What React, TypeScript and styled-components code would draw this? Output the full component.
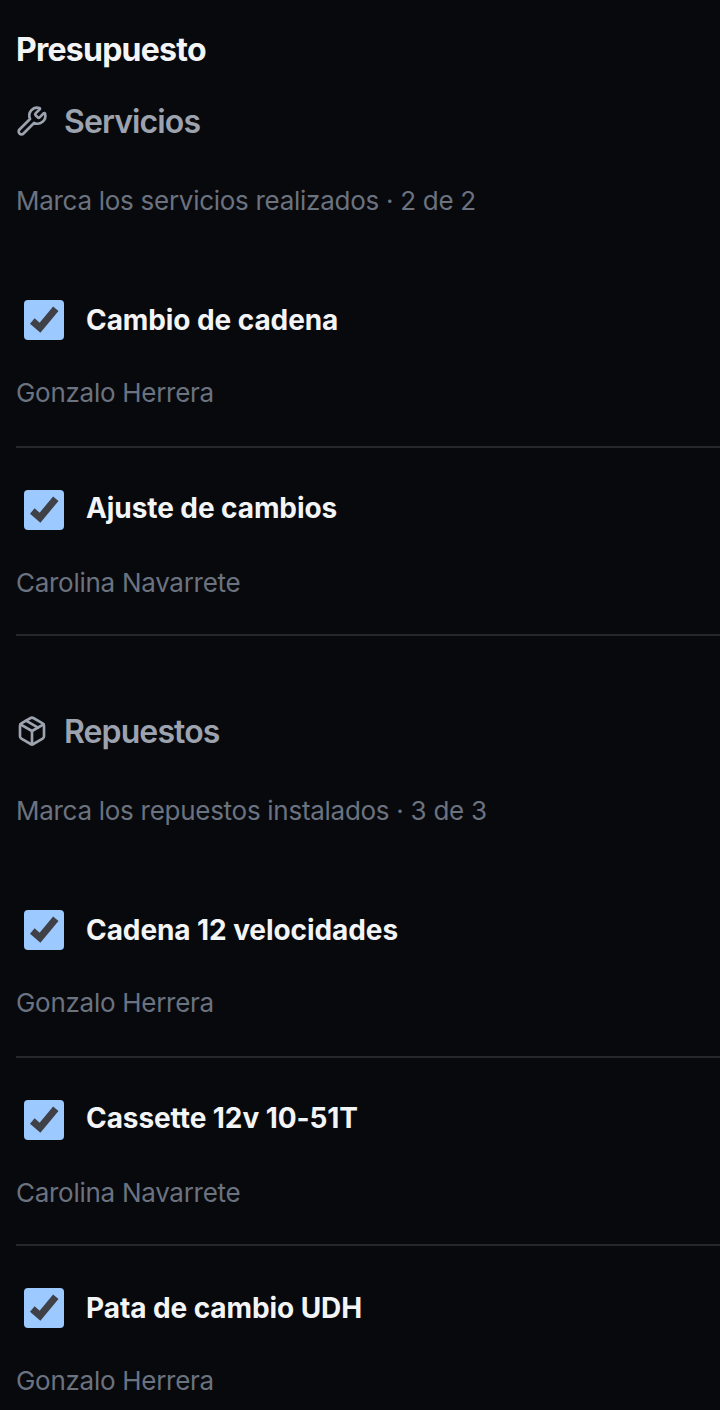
import React from 'react';
import styled, { createGlobalStyle } from 'styled-components';
import { Package, Wrench, type LucideIcon } from 'lucide-react';

const GlobalStyle = createGlobalStyle`
    html, body {
        margin: 0;
        padding: 0;
        background: #08090c;
    }
`;

const Page = styled.div`
    width: 720px;
    height: 1410px;
    overflow: hidden;
    box-sizing: border-box;
    padding: 30px 0 0 16px;
    background: #08090c;
    font-family: Inter, "Liberation Sans", sans-serif;
`;

const Title = styled.h1`
    margin: 0 0 33px;
    padding-top: 1px;
    height: 37px;
    font-size: 32px;
    line-height: 38px;
    font-weight: 700;
    letter-spacing: -0.75px;
    color: #f3f4f6;
`;

const Section = styled.section`
    margin-bottom: 75px;
`;

const SectionHeader = styled.div`
    display: flex;
    align-items: center;
    gap: 16px;
    height: 40px;
    color: #9ca3af;
`;

const SectionTitle = styled.h2`
    margin: 0;
    padding-top: 2px;
    font-size: 32px;
    line-height: 40px;
    font-weight: 600;
    letter-spacing: -0.9px;
    color: #9ca3af;
`;

const Hint = styled.p`
    margin: 40px 0 0;
    font-size: 26px;
    line-height: 40px;
    letter-spacing: -0.28px;
    color: #6b7280;
`;

const ItemList = styled.div`
    margin-top: 37px;
`;

const Row = styled.div<{ $tall: boolean }>`
    height: ${(props) => (props.$tall ? 190 : 188)}px;
    box-sizing: border-box;
    padding-top: 42px;
    border-bottom: 2px solid #26282d;
`;

const CheckRow = styled.div`
    display: flex;
    align-items: center;
    gap: 22px;
    padding-left: 8px;
    height: 40px;
`;

const Checkbox = styled.span`
    display: flex;
    align-items: center;
    justify-content: center;
    flex-shrink: 0;
    width: 40px;
    height: 40px;
    border-radius: 4px;
    background: #9cc9ff;
`;

const ItemName = styled.span<{ $raised: boolean }>`
    padding-bottom: ${(props) => (props.$raised ? 4 : 0)}px;
    font-size: 28px;
    line-height: 40px;
    font-weight: 700;
    letter-spacing: -0.08px;
    color: #f3f4f6;
`;

const Owner = styled.div`
    margin-top: 33px;
    font-size: 26px;
    line-height: 40px;
    letter-spacing: -0.28px;
    color: #6b7280;
`;

const CheckMark = () => (
    <svg width="30" height="30" viewBox="0 0 30 30" fill="none">
        <path d="M3.3 16L11 22.7L26.8 3.7" stroke="#3f4147" strokeWidth="7" />
    </svg>
);

interface Item {
    name: string;
    owner: string;
}

interface BudgetSectionProps {
    icon: LucideIcon;
    title: string;
    hint: string;
    items: Item[];
}

function BudgetSection({ icon: Icon, title, hint, items }: BudgetSectionProps) {
    return (
        <Section>
            <SectionHeader>
                <Icon size={32} strokeWidth={2} />
                <SectionTitle>{title}</SectionTitle>
            </SectionHeader>
            <Hint>{hint}</Hint>
            <ItemList>
                {items.map((item, index) => (
                    <Row key={item.name} $tall={index % 2 === 0}>
                        <CheckRow>
                            <Checkbox>
                                <CheckMark />
                            </Checkbox>
                            <ItemName $raised={index % 2 === 1}>{item.name}</ItemName>
                        </CheckRow>
                        <Owner>{item.owner}</Owner>
                    </Row>
                ))}
            </ItemList>
        </Section>
    );
}

export default function App() {
    return (
        <Page>
            <GlobalStyle />
            <Title>Presupuesto</Title>
            <BudgetSection
                icon={Wrench}
                title="Servicios"
                hint="Marca los servicios realizados · 2 de 2"
                items={[
                    { name: 'Cambio de cadena', owner: 'Gonzalo Herrera' },
                    { name: 'Ajuste de cambios', owner: 'Carolina Navarrete' },
                ]}
            />
            <BudgetSection
                icon={Package}
                title="Repuestos"
                hint="Marca los repuestos instalados · 3 de 3"
                items={[
                    { name: 'Cadena 12 velocidades', owner: 'Gonzalo Herrera' },
                    { name: 'Cassette 12v 10-51T', owner: 'Carolina Navarrete' },
                    { name: 'Pata de cambio UDH', owner: 'Gonzalo Herrera' },
                ]}
            />
        </Page>
    );
}
